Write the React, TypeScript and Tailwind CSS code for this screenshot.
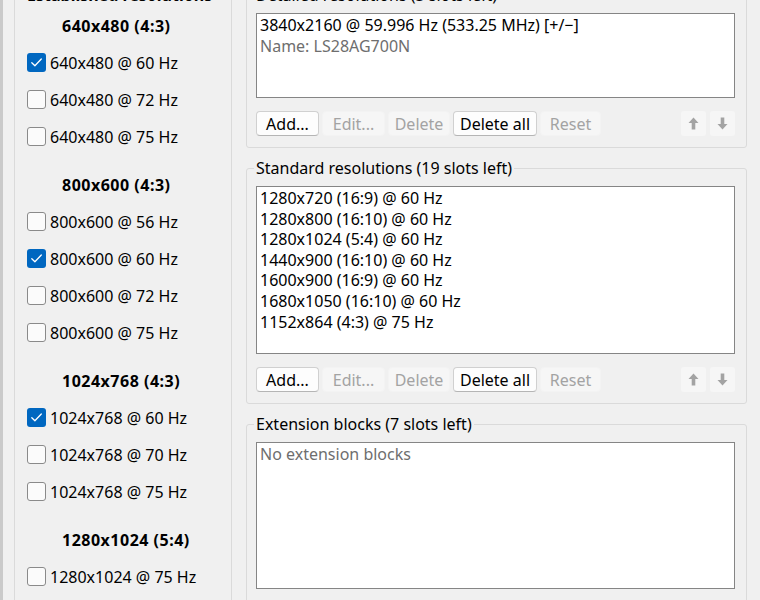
import React from "react";

type Mode = { label: string; checked: boolean };
type Section = { title: string; modes: Mode[] };

const sections: Section[] = [
  {
    title: "640x480 (4:3)",
    modes: [
      { label: "640x480 @ 60 Hz", checked: true },
      { label: "640x480 @ 72 Hz", checked: false },
      { label: "640x480 @ 75 Hz", checked: false },
    ],
  },
  {
    title: "800x600 (4:3)",
    modes: [
      { label: "800x600 @ 56 Hz", checked: false },
      { label: "800x600 @ 60 Hz", checked: true },
      { label: "800x600 @ 72 Hz", checked: false },
      { label: "800x600 @ 75 Hz", checked: false },
    ],
  },
  {
    title: "1024x768 (4:3)",
    modes: [
      { label: "1024x768 @ 60 Hz", checked: true },
      { label: "1024x768 @ 70 Hz", checked: false },
      { label: "1024x768 @ 75 Hz", checked: false },
    ],
  },
  {
    title: "1280x1024 (5:4)",
    modes: [{ label: "1280x1024 @ 75 Hz", checked: false }],
  },
];

const standard = [
  "1280x720 (16:9) @ 60 Hz",
  "1280x800 (16:10) @ 60 Hz",
  "1280x1024 (5:4) @ 60 Hz",
  "1440x900 (16:10) @ 60 Hz",
  "1600x900 (16:9) @ 60 Hz",
  "1680x1050 (16:10) @ 60 Hz",
  "1152x864 (4:3) @ 75 Hz",
];

const CheckBox: React.FC<{ checked: boolean }> = ({ checked }) =>
  checked ? (
    <span className="flex h-[19px] w-[19px] shrink-0 items-center justify-center rounded-[3px] bg-[#0067c0]">
      <svg width="13" height="13" viewBox="0 0 13 13" fill="none">
        <path d="M1.8 6.8 L4.9 9.8 L11.3 3" stroke="white" strokeWidth="1.3" strokeLinecap="round" strokeLinejoin="round" />
      </svg>
    </span>
  ) : (
    <span className="h-[19px] w-[19px] shrink-0 rounded-[3px] border border-[#8a8a8a] bg-[#fbfbfb]" />
  );

const Btn: React.FC<{ label: string; w: string; enabled?: boolean }> = ({ label, w, enabled }) => (
  <button
    type="button"
    className={`${w} h-[25px] rounded-[4px] border text-[16px] leading-none ${
      enabled
        ? "border-[#d0d0d0] border-b-[#b5b5b5] bg-[#fdfdfd] text-black"
        : "border-[#f3f3f3] bg-[#f6f6f6] text-[#a3a3a3]"
    }`}
  >
    {label}
  </button>
);

const Arrow: React.FC<{ down?: boolean }> = ({ down }) => (
  <button type="button" className="flex h-[25px] w-[25px] items-center justify-center rounded-[3px] bg-[#f6f6f6]">
    <svg width="11" height="13" viewBox="0 0 11 13" className={down ? "rotate-180" : ""}>
      <path d="M5.5 0.5 L10.5 6 L7.3 6 L7.3 12.5 L3.7 12.5 L3.7 6 L0.5 6 Z" fill="#a3a3a3" />
    </svg>
  </button>
);

const ButtonRow: React.FC = () => (
  <div className="mt-[13px] flex items-center">
    <div className="flex gap-[3px]">
      <Btn label="Add..." w="w-[63px]" enabled />
      <Btn label="Edit..." w="w-[63px]" />
      <Btn label="Delete" w="w-[62px]" />
      <Btn label="Delete all" w="w-[84px]" enabled />
      <Btn label="Reset" w="w-[61px]" />
    </div>
    <div className="ml-auto flex gap-[4px]">
      <Arrow />
      <Arrow down />
    </div>
  </div>
);

const Group: React.FC<{ title: string; children: React.ReactNode }> = ({ title, children }) => (
  <fieldset className="rounded-[3px] border border-[#dadada] px-[9px] pr-[11px] pt-[8px] pb-[11px]">
    <legend className="-ml-[2px] px-[2px] leading-[20px] text-black">{title}</legend>
    {children}
  </fieldset>
);

const ListBox: React.FC<{ h: string; children: React.ReactNode }> = ({ h, children }) => (
  <div className={`${h} border border-[#858585] bg-white px-[3px] py-[1px] leading-[20.6px]`}>{children}</div>
);

export default function App() {
  return (
    <div className="flex h-[600px] w-[760px] overflow-hidden bg-[#f0f0f0] font-['Noto_Sans',sans-serif] text-[16px] text-black">
      <div className="h-full w-[3px] shrink-0 bg-[#cacaca]" />

      <fieldset className="ml-[11px] -mt-[15px] w-[218px] shrink-0 self-start rounded-[3px] border border-[#dadada] px-[12px] pt-[2px] pb-[20px]">
        <legend className="-ml-[2px] px-[2px] font-bold leading-[20px]">Established resolutions</legend>
        {sections.map((s, i) => (
          <div key={s.title} className={i > 0 ? "mt-[11px]" : ""}>
            <div className="flex h-[37px] items-center pl-[35px] font-bold tracking-[0.5px]">{s.title}</div>
            {s.modes.map((m) => (
              <div key={m.label} className="flex h-[37px] items-center gap-[4px]">
                <CheckBox checked={m.checked} />
                <span>{m.label}</span>
              </div>
            ))}
          </div>
        ))}
      </fieldset>

      <div className="ml-[14px] -mt-[15px] flex w-[501px] shrink-0 flex-col gap-[10px]">
        <Group title="Detailed resolutions (3 slots left)">
          <ListBox h="h-[85px]">
            <div>3840x2160 @ 59.996 Hz (533.25 MHz) [+/−]</div>
            <div className="text-[#6e6e6e]">Name: LS28AG700N</div>
          </ListBox>
          <ButtonRow />
        </Group>

        <Group title="Standard resolutions (19 slots left)">
          <ListBox h="h-[168px]">
            {standard.map((r) => (
              <div key={r}>{r}</div>
            ))}
          </ListBox>
          <ButtonRow />
        </Group>

        <Group title="Extension blocks (7 slots left)">
          <ListBox h="h-[147px]">
            <div className="text-[#6e6e6e]">No extension blocks</div>
          </ListBox>
          <div className="h-[40px]" />
        </Group>
      </div>
    </div>
  );
}
